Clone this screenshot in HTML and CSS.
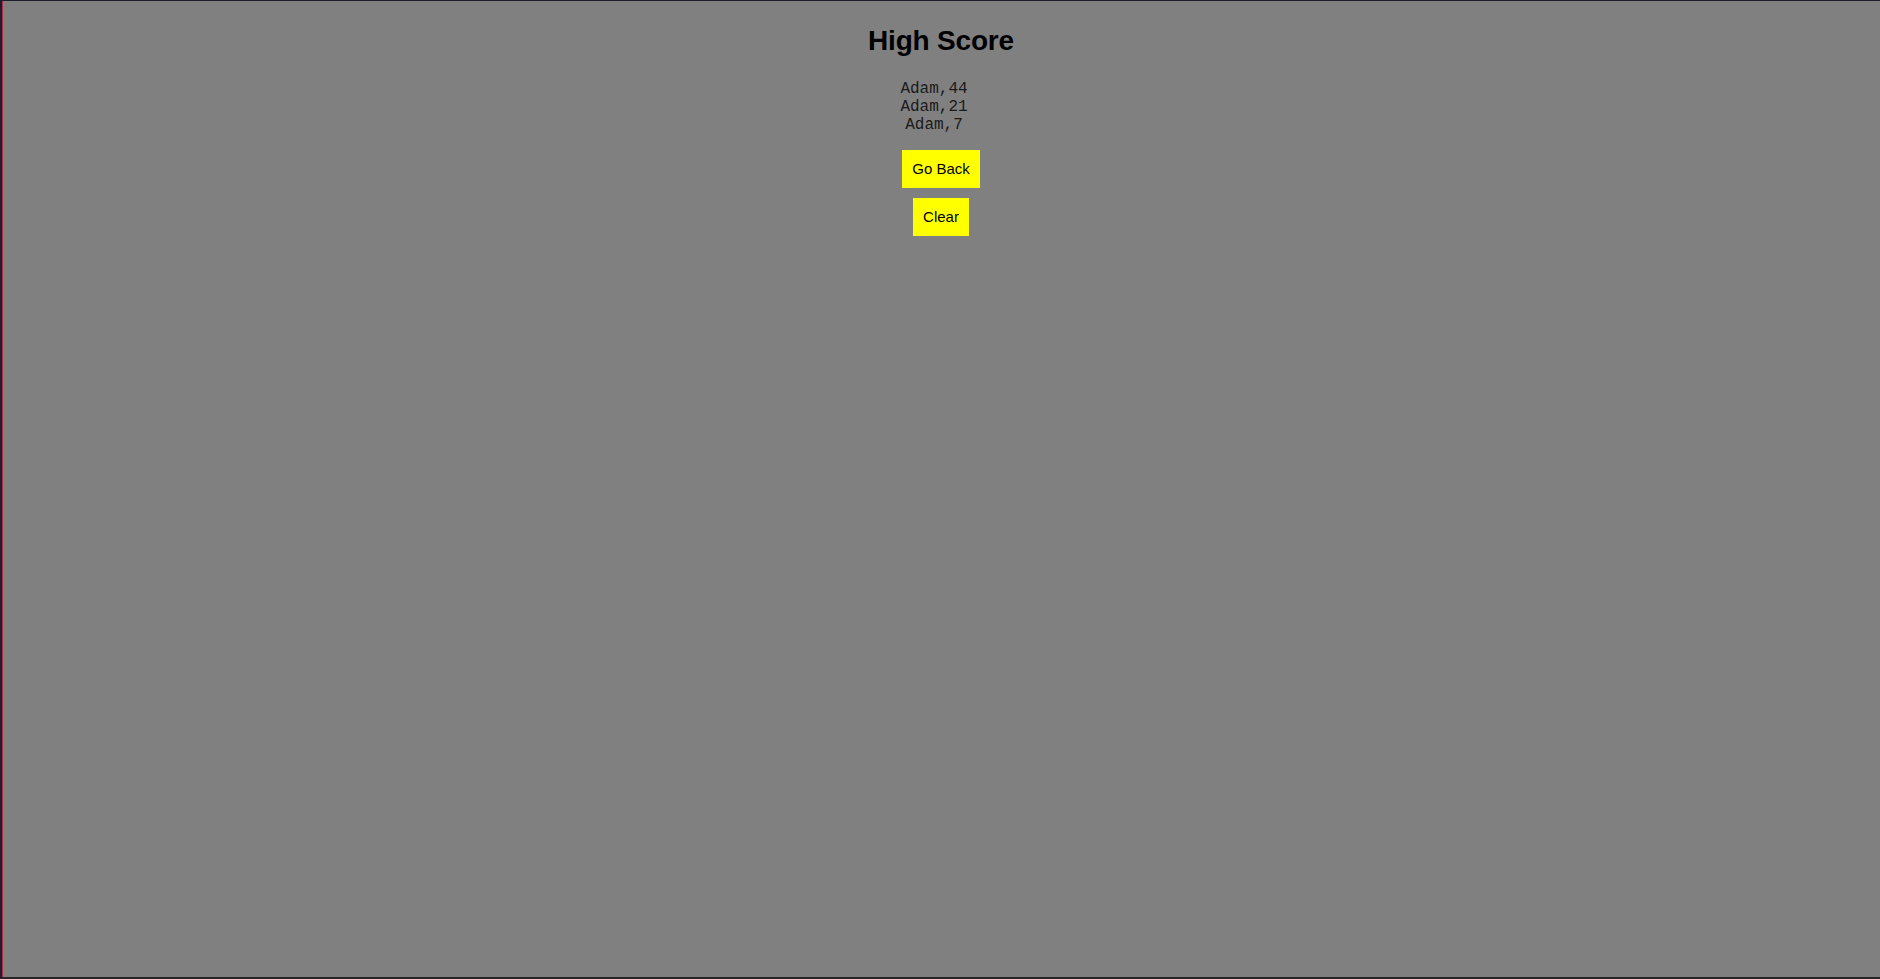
FILE: index.html
```html
<!DOCTYPE html>
<html lang="en">
<head>
<meta charset="utf-8">
<title>High Score</title>
<link rel="stylesheet" href="styles.css">
</head>
<body>
<div class="frame">
  <main class="page">
    <h1 class="title">High Score</h1>
    <div class="scores">
      <div class="score">Adam,44</div>
      <div class="score">Adam,21</div>
      <div class="score">Adam,7</div>
    </div>
    <div class="actions">
      <button class="btn" type="button">Go Back</button>
      <button class="btn" type="button">Clear</button>
    </div>
  </main>
</div>
</body>
</html>
```

FILE: styles.css
```css
html, body {
  margin: 0;
  padding: 0;
  height: 100%;
}

body {
  background: #808080;
  font-family: "Liberation Sans", Arial, sans-serif;
}

.frame {
  box-sizing: border-box;
  height: 100vh;
  background: #808080;
  border-top: 1px solid #1e1e2a;
  border-left: 2px solid #1e1e2a;
  border-bottom: 2px solid #262626;
  box-shadow: inset 1px 0 0 #b0284a;
}

.page {
  display: flex;
  flex-direction: column;
  align-items: center;
  padding-top: 24px;
}

.title {
  margin: 0;
  font-size: 28px;
  line-height: 32px;
  font-weight: 700;
  color: #000;
  letter-spacing: -0.2px;
}

.scores {
  margin-top: 23px;
  margin-right: 14px;
  display: flex;
  flex-direction: column;
  align-items: center;
  font-family: "Liberation Mono", "Courier New", monospace;
  font-size: 16px;
  line-height: 18px;
  color: #1a1a1a;
}

.actions {
  margin-top: 16px;
  display: flex;
  flex-direction: column;
  align-items: center;
  gap: 10px;
}

.btn {
  background: #ffff00;
  border: none;
  color: #000;
  font-family: "Liberation Sans", Arial, sans-serif;
  font-size: 15px;
  line-height: 18px;
  padding: 10px 10px;
  margin: 0;
  cursor: pointer;
}
```
